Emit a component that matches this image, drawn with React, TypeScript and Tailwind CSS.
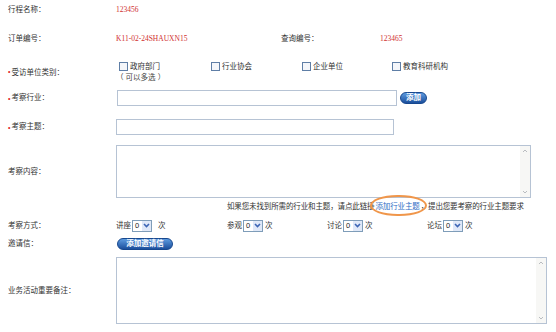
import type { ReactNode } from 'react';

const FONT = { fontFamily: '"Liberation Sans", "Noto Sans CJK SC", sans-serif' };
const SERIF = { fontFamily: '"Liberation Serif", "Noto Sans CJK SC", serif' };

function Req() {
    return <span className="text-[#e02020] mr-[1px] text-[7px] leading-none">•</span>;
}

function Label({ children, req }: { children: ReactNode; req?: boolean }) {
    return (
        <div className="w-[116px] shrink-0 pl-[8px] flex items-center text-[#333]">
            {req && <Req />}
            {children}
        </div>
    );
}

function Check({ text }: { text: string }) {
    return (
        <div className="flex items-center">
            <span className="w-[9px] h-[9px] border border-[#5f7ea6] bg-[#f4f6fa] mr-[2px]"></span>
            <span>{text}</span>
        </div>
    );
}

function Select() {
    return (
        <span className="inline-flex items-center h-[12px] w-[20px] border border-[#7f9db9] bg-white mx-[1px]">
            <span className="flex-1 pl-[2px] text-[#222] leading-none">0</span>
            <span className="w-[9px] h-[10px] bg-[#dfe8f8] flex items-center justify-center">
                <svg width="7" height="5" viewBox="0 0 7 5">
                    <polyline points="1,1 3.5,3.5 6,1" fill="none" stroke="#3d66b5" strokeWidth="1.6" />
                </svg>
            </span>
        </span>
    );
}

function BlueBtn({ text, w }: { text: string; w: string }) {
    return (
        <span className={`${w} h-[12px] rounded-full border border-[#16478e] bg-gradient-to-b from-[#5d9be0] to-[#1b4f9c] text-white font-bold flex items-center justify-center leading-none`}>
            {text}
        </span>
    );
}

function FakeArea({ w, h }: { w: string; h: string }) {
    return (
        <div className={`${w} ${h} border border-[#b6c3d4] bg-white flex justify-end`}>
            <div className="w-[10px] h-full bg-[#f7f7f5] flex flex-col justify-between items-center py-[3px]">
                <svg width="6" height="4" viewBox="0 0 6 4">
                    <polyline points="1,3 3,1 5,3" fill="none" stroke="#b9bcc0" strokeWidth="1" />
                </svg>
                <svg width="6" height="4" viewBox="0 0 6 4">
                    <polyline points="1,1 3,3 5,1" fill="none" stroke="#b9bcc0" strokeWidth="1" />
                </svg>
            </div>
        </div>
    );
}

function Method({ name, w, gap }: { name: string; w: string; gap?: string }) {
    return (
        <div className={`${w} flex items-center`}>
            <span>{name}</span>
            <Select />
            <span className={gap ?? 'ml-[1px]'}>次</span>
        </div>
    );
}

export default function App() {
    return (
        <div className="w-[556px] h-[332px] bg-white text-[7.5px] leading-none text-[#333] overflow-hidden" style={FONT}>
            <div className="flex h-[19px] items-center">
                <Label>行程名称：</Label>
                <span className="text-[#d03030]" style={SERIF}>123456</span>
            </div>

            <div className="flex h-[40px] items-center">
                <Label>订单编号：</Label>
                <span className="w-[165px] text-[#d03030]" style={SERIF}>K11-02-24SHAUXN15</span>
                <span className="w-[99px]">查询编号：</span>
                <span className="text-[#d03030]" style={SERIF}>123465</span>
            </div>

            <div className="flex h-[25px]">
                <Label req>
                    <span className="pt-[2px]">受访单位类别：</span>
                </Label>
                <div className="flex flex-col pt-[3px]">
                    <div className="flex pl-[3px]">
                        <div className="w-[92px]"><Check text="政府部门" /></div>
                        <div className="w-[91px]"><Check text="行业协会" /></div>
                        <div className="w-[90px]"><Check text="企业单位" /></div>
                        <Check text="教育科研机构" />
                    </div>
                    <div className="mt-[3px] text-[#444]">（ 可以多选 ）</div>
                </div>
            </div>

            <div className="flex h-[28px] items-center">
                <Label req>考察行业：</Label>
                <div className="ml-[1px] w-[280px] h-[16px] border border-[#b6c3d4] bg-white"></div>
                <div className="ml-[3px]"><BlueBtn text="添加" w="w-[27px]" /></div>
            </div>

            <div className="flex h-[30px] items-center">
                <Label req>考察主题：</Label>
                <div className="w-[278px] h-[16px] border border-[#b6c3d4] bg-white"></div>
            </div>

            <div className="flex items-center mt-[3px]">
                <Label>考察内容：</Label>
                <FakeArea w="w-[415px]" h="h-[53px]" />
            </div>

            <div className="flex h-[17px] items-center pl-[227px] tracking-[-0.13px]">
                <span>如果您未找到所需的行业和主题，请点此链接</span>
                <span className="relative text-[#2f6cc4] mx-[1px]">
                    添加行业主题
                    <span className="absolute left-[-5px] right-[-7px] top-[-8px] bottom-[-6px] rounded-[50%] border-2 border-[#f0964a]"></span>
                </span>
                <span>，提出您要考察的行业主题要求</span>
            </div>

            <div className="flex h-[21px] items-center">
                <Label>考察方式：</Label>
                <Method name="讲座" w="w-[111px]" gap="ml-[5px]" />
                <Method name="参观" w="w-[100px]" />
                <Method name="讨论" w="w-[100px]" />
                <Method name="论坛" w="w-[100px]" />
            </div>

            <div className="flex h-[16px] items-center">
                <Label>邀请信：</Label>
                <div className="ml-[1px]"><BlueBtn text="添加邀请信" w="w-[56px]" /></div>
            </div>

            <div className="flex items-center mt-[5px]">
                <Label>业务活动重要备注：</Label>
                <FakeArea w="w-[431px]" h="h-[67px]" />
            </div>
        </div>
    );
}
